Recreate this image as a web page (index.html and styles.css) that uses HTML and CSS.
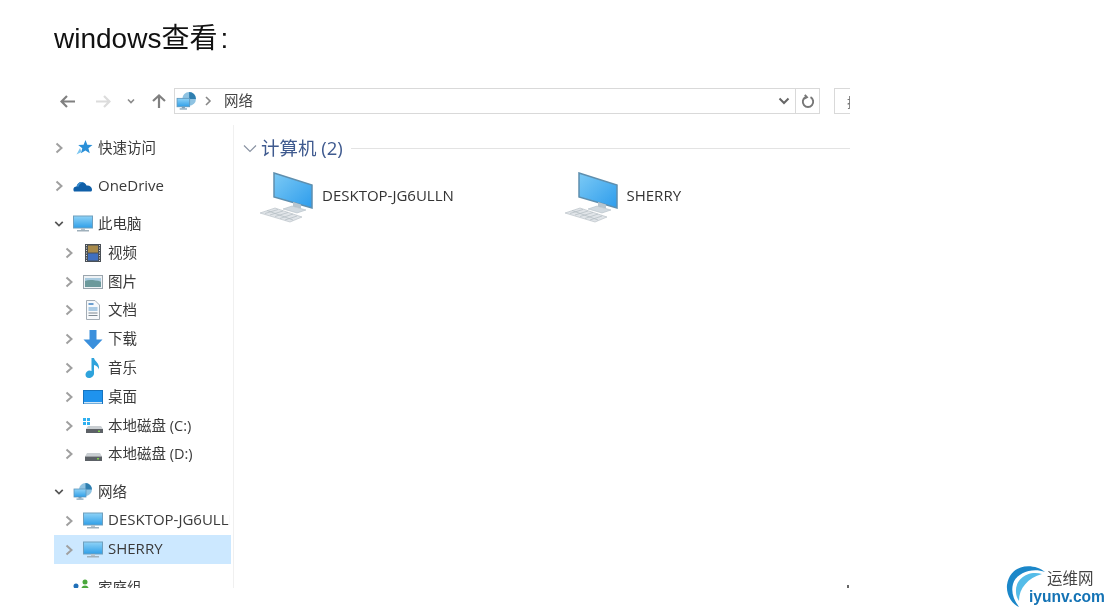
FILE: index.html
```html
<!DOCTYPE html>
<html lang="zh">
<head>
<meta charset="utf-8">
<title>windows查看</title>
<link rel="stylesheet" href="styles.css">
</head>
<body>
<svg class="defs" width="0" height="0" aria-hidden="true">
  <defs>
    <linearGradient id="scr" x1="0" y1="0" x2="0" y2="1"><stop offset="0" stop-color="#8fd3f7"/><stop offset="1" stop-color="#2f9fe8"/></linearGradient>
    <linearGradient id="bigscr" x1="0" y1="0" x2="1" y2="1"><stop offset="0" stop-color="#7ccaf5"/><stop offset="1" stop-color="#2d9cec"/></linearGradient>
    <symbol id="chev-r" viewBox="0 0 10 12"><path d="M2.500 1.500 7.500 6l-5 4.500" fill="none" stroke="#a0a0a0" stroke-width="2"/></symbol>
    <symbol id="chev-d" viewBox="0 0 12 10"><path d="M1.500 2.500 6 7l4.500-4.500" fill="none" stroke="#555" stroke-width="2"/></symbol>
    <symbol id="monitor" viewBox="0 0 20 18"><rect x="0.500" y="1" width="19" height="12" fill="url(#scr)" stroke="#6f9fbe"/><rect x="8" y="13" width="4" height="2" fill="#b5c3cc"/><rect x="4" y="15" width="12" height="1.500" fill="#9fb0bb"/></symbol>
    <symbol id="network" viewBox="0 0 20 18"><circle cx="12.500" cy="6.500" r="6.500" fill="#8fc3e2"/><path d="M12.500 0a6.500 6.500 0 0 1 6.500 6.500h-6.500z" fill="#2f7fb0"/><rect x="1" y="6" width="12" height="8" fill="url(#scr)" stroke="#5e97bd" stroke-width=".8"/><rect x="5.500" y="14" width="3" height="1.500" fill="#7fa0b5"/><rect x="3.500" y="15.500" width="7" height="1.200" fill="#7fa0b5"/></symbol>
    <symbol id="star" viewBox="0 0 20 18"><path d="m12.500 1 1.800 4.700 5.200.3-4.100 3.200 1.400 5.100-4.400-2.900-4.500 2.900 1.400-5.100L5.200 6l5.400-.3z" fill="#2a8fd8"/><path d="M7 9 3.500 15.500 8.500 13z" fill="#7cc6f0"/></symbol>
    <symbol id="cloud" viewBox="0 0 20 18"><path d="M1 14.500c-1.500-2.500 0-5 2.500-5 .8-3 3.800-5.500 7-4 1.500.6 2.400 1.600 3 3 3-.5 5.500 1.500 5.500 4 0 1.200-.4 2-1 2z" fill="#0f5fa8"/><path d="M3.500 9.500c.8-3 3.800-5.500 7-4-3 .3-4.500 2-5 4.300z" fill="#3d8fd0"/></symbol>
    <symbol id="film" viewBox="0 0 20 20"><rect x="2" y="1" width="16" height="18" fill="#4a5056"/><rect x="5" y="2.500" width="10" height="7" fill="#a88a4a"/><rect x="5" y="10.500" width="10" height="7" fill="#3f6fc0"/><path d="M3 2.500h1M3 5h1M3 7.500h1M3 10h1M3 12.500h1M3 15h1M3 17.500h1M16 2.500h1M16 5h1M16 7.500h1M16 10h1M16 12.500h1M16 15h1M16 17.500h1" stroke="#ddd" stroke-width="1"/></symbol>
    <symbol id="picture" viewBox="0 0 20 20"><rect x="0.500" y="3.500" width="19" height="13" fill="#eef2f5" stroke="#9aa5ad"/><path d="M2 6h16v3H2z" fill="#a9cbe0"/><path d="M2 9c4-1.500 9-1 16 .5V15H2z" fill="#6c9a9c"/></symbol>
    <symbol id="doc" viewBox="0 0 20 20"><path d="M3.500.5h8.500l4.500 4.500v14.500H3.500z" fill="#f7f9fb" stroke="#a4adb5"/><path d="M5.500 4h5" stroke="#3c7fc0" stroke-width="1.500"/><path d="M5.500 8h9M5.500 10h9" stroke="#5f9ccc"/><path d="M5.500 13h9M5.500 15.500h9" stroke="#7f8a93"/></symbol>
    <symbol id="down" viewBox="0 -1 20 20"><path d="M6.500 0h7v9.500h6L10 19.500.5 9.500h6z" fill="#3a8fdc"/></symbol>
    <symbol id="note" viewBox="0 0 20 20"><path d="M8.500 0h2.500c.3 3 6 5 5 11.500-.8-2.500-2.800-4-5-4.500v8.500c0 2.500-2.600 4.500-5 4.500S2.500 18.600 2.500 16.500s2.200-4 4-4c.8 0 1.500.2 2 .5z" fill="#2ea3dc"/></symbol>
    <symbol id="desk" viewBox="0 0 20 20"><rect x="0.500" y="3.500" width="19" height="13" fill="#1f93ee" stroke="#1674c0"/><path d="M1 15h18v1.500H1z" fill="#cfe6f7"/></symbol>
    <symbol id="drivec" viewBox="0 0 20 20"><rect x="0" y="2" width="3" height="3" fill="#2fb0f0"/><rect x="4" y="2" width="3" height="3" fill="#2fb0f0"/><rect x="0" y="6" width="3" height="3" fill="#2fb0f0"/><rect x="4" y="6" width="3" height="3" fill="#2fb0f0"/><path d="M5 10h13l2 3H3z" fill="#c9ced2"/><rect x="3" y="13" width="17" height="4" fill="#5c6166"/><rect x="15" y="14.500" width="2" height="1.500" fill="#7fd04a"/></symbol>
    <symbol id="drive" viewBox="0 0 20 20"><path d="M4 9h13l2 3.500H2z" fill="#c9ced2"/><rect x="2" y="12.500" width="17" height="4.500" fill="#5c6166"/><rect x="14" y="14" width="2" height="1.500" fill="#7fd04a"/></symbol>
    <symbol id="home" viewBox="0 0 20 20"><circle cx="3" cy="8" r="2.500" fill="#1f6fb8"/><path d="M-1 15c0-3 2-4.500 4-4.500S7 12 7 15z" fill="#1f6fb8"/><circle cx="12" cy="4" r="2.500" fill="#4aa83c"/><path d="M8 12c0-3 2-4.500 4-4.500s4 1.500 4 4.500z" fill="#4aa83c"/></symbol>
    <symbol id="bigpc" viewBox="0 0 56 52"><path d="M16 1 54 13v23L16 25z" fill="url(#bigscr)" stroke="#5f8fae" stroke-width="1.500"/><path d="M35 30l8 2.500v4l-8-2z" fill="#b9c6cf"/><path d="M25 37l9-3 14 4-9 3z" fill="#d2dae0" stroke="#aab6bf" stroke-width=".5"/><path d="M2 41 17 36l27 9-12 5z" fill="#e0e4e8" stroke="#b4bcc3" stroke-width=".6"/><path d="M7 41.500 20 37.500M12 43 25 39M17 44.500 30 40.500M22 46.500 35 42M27 48 39 44M9 38.500 35 48" stroke="#b2bbc2" stroke-width=".7"/></symbol>
  </defs>
</svg>

<main class="page">
  <h1 class="title">windows查看<span class="colon">:</span></h1>

  <section class="explorer">
    <header class="toolbar">
      <div class="nav">
        <svg class="nav-back" viewBox="0 0 15 13"><path d="M7 1 1.500 6.500 7 12M1.500 6.500H15" fill="none" stroke="#808080" stroke-width="2.200"/></svg>
        <svg class="nav-fwd" viewBox="0 0 15 13"><path d="M8 1l5.500 5.500L8 12M13.500 6.500H0" fill="none" stroke="#dcdcdc" stroke-width="2.200"/></svg>
        <svg class="nav-drop" viewBox="0 0 8 6"><path d="M1 1.500 4 4.500 7 1.500" fill="none" stroke="#8a8a8a" stroke-width="1.600"/></svg>
        <svg class="nav-up" viewBox="0 0 14 14"><path d="M1 7l6-5.500L13 7M7 1.500V14" fill="none" stroke="#808080" stroke-width="2.200"/></svg>
      </div>
      <div class="address">
        <svg class="addr-icon"><use href="#network"/></svg>
        <svg class="addr-chev" viewBox="0 0 8 10"><path d="M2 1l4 4-4 4" fill="none" stroke="#888" stroke-width="1.600"/></svg>
        <span class="addr-text">网络</span>
        <svg class="addr-drop" viewBox="0 0 12 8"><path d="M1.500 1.500 6 6l4.500-4.500" fill="none" stroke="#666" stroke-width="2"/></svg>
        <span class="addr-refresh">
          <svg viewBox="0 0 14 14"><path d="M4.500 3.200a5.200 5.200 0 1 0 5 0M3.800.8l2.200 2.400-2.800 1.600" fill="none" stroke="#777" stroke-width="1.900"/></svg>
        </span>
      </div>
      <div class="search"><span class="search-text">搜</span></div>
    </header>

    <div class="body">
      <nav class="tree">
        <div class="group">
          <div class="row"><svg class="chev"><use href="#chev-r"/></svg><svg class="ico"><use href="#star"/></svg><span>快速访问</span></div>
        </div>
        <div class="group">
          <div class="row"><svg class="chev"><use href="#chev-r"/></svg><svg class="ico"><use href="#cloud"/></svg><span class="lat">OneDrive</span></div>
        </div>
        <div class="group">
          <div class="row"><svg class="chev"><use href="#chev-d"/></svg><svg class="ico"><use href="#monitor"/></svg><span>此电脑</span></div>
          <div class="row sub"><svg class="chev"><use href="#chev-r"/></svg><svg class="ico"><use href="#film"/></svg><span>视频</span></div>
          <div class="row sub"><svg class="chev"><use href="#chev-r"/></svg><svg class="ico"><use href="#picture"/></svg><span>图片</span></div>
          <div class="row sub"><svg class="chev"><use href="#chev-r"/></svg><svg class="ico"><use href="#doc"/></svg><span>文档</span></div>
          <div class="row sub"><svg class="chev"><use href="#chev-r"/></svg><svg class="ico"><use href="#down"/></svg><span>下载</span></div>
          <div class="row sub"><svg class="chev"><use href="#chev-r"/></svg><svg class="ico"><use href="#note"/></svg><span>音乐</span></div>
          <div class="row sub"><svg class="chev"><use href="#chev-r"/></svg><svg class="ico"><use href="#desk"/></svg><span>桌面</span></div>
          <div class="row sub"><svg class="chev"><use href="#chev-r"/></svg><svg class="ico"><use href="#drivec"/></svg><span>本地磁盘 (C:)</span></div>
          <div class="row sub"><svg class="chev"><use href="#chev-r"/></svg><svg class="ico"><use href="#drive"/></svg><span>本地磁盘 (D:)</span></div>
        </div>
        <div class="group">
          <div class="row"><svg class="chev"><use href="#chev-d"/></svg><svg class="ico"><use href="#network"/></svg><span>网络</span></div>
          <div class="row sub"><svg class="chev"><use href="#chev-r"/></svg><svg class="ico"><use href="#monitor"/></svg><span class="lat clip">DESKTOP-JG6ULLN</span></div>
          <div class="row sub selected"><svg class="chev"><use href="#chev-r"/></svg><svg class="ico"><use href="#monitor"/></svg><span class="lat">SHERRY</span></div>
        </div>
        <div class="group">
          <div class="row"><svg class="chev"></svg><svg class="ico"><use href="#home"/></svg><span>家庭组</span></div>
        </div>
      </nav>

      <div class="content">
        <div class="section-head">
          <svg class="sec-chev" viewBox="0 0 14 9"><path d="M1 1.500 7 7.500l6-6" fill="none" stroke="#8a93a3" stroke-width="1.200"/></svg>
          <span class="sec-title">计算机 (2)</span>
          <span class="sec-line"></span>
        </div>
        <div class="items">
          <div class="item"><svg class="pc"><use href="#bigpc"/></svg><span>DESKTOP-JG6ULLN</span></div>
          <div class="item"><svg class="pc"><use href="#bigpc"/></svg><span>SHERRY</span></div>
        </div>
      </div>
    </div>
    <span class="tick"></span>
  </section>
</main>

<aside class="logo">
  <svg class="logo-mark" viewBox="0 0 40 44"><path d="M39 7C28-2 4-2 1 20c-1 10 5 19 12 22C7 34 5 26 7 19 10 8 26 2 39 7z" fill="#1b87c9"/><path d="M36 9C22 5 9 14 10 27c0 3 1 6 3 9C13 23 22 13 36 9z" fill="#55bce8"/></svg>
  <span class="logo-cn">运维网</span>
  <span class="logo-en">iyunv.com</span>
</aside>
</body>
</html>
```

FILE: styles.css
```css
* { box-sizing: border-box; }

html, body {
  margin: 0;
  height: 100%;
  background: #fff;
  overflow: hidden;
}

body {
  font-family: "Open Sans", "Noto Sans CJK SC", sans-serif;
  color: #333;
}

.defs { position: absolute; }

.page {
  padding: 20px 0 0 54px;
}

.title {
  margin: 0;
  height: 60px;
  font: 400 28px/38px "Liberation Sans", "Noto Sans CJK SC", sans-serif;
  color: #111;
  filter: blur(0.3px);
}

.colon { margin-left: 3px; }

.explorer {
  position: relative;
  width: 796px;
  height: 508px;
  overflow: hidden;
  font-size: 14.5px;
  filter: blur(0.35px);
}

.lat { font-size: 15px; }

.clip {
  max-width: 122px;
  overflow: hidden;
}

.tick {
  position: absolute;
  left: 793px;
  top: 505px;
  width: 2px;
  height: 3px;
  background: #666;
}

/* toolbar */
.toolbar {
  display: flex;
  align-items: center;
  height: 42px;
}

.nav {
  display: flex;
  align-items: center;
  width: 120px;
  height: 26px;
  flex: none;
}

.nav svg { display: block; flex: none; }
.nav-back { width: 15px; height: 13px; margin-left: 6px; }
.nav-fwd { width: 15px; height: 13px; margin-left: 21px; }
.nav-drop { width: 8px; height: 6px; margin-left: 16px; }
.nav-up { width: 14px; height: 14px; margin-left: 17px; }

.address {
  display: flex;
  align-items: center;
  width: 646px;
  height: 26px;
  flex: none;
  border: 1px solid #d9d9d9;
}

.addr-icon { width: 21px; height: 19px; margin-left: 1px; flex: none; }
.addr-chev { width: 8px; height: 10px; margin-left: 7px; flex: none; }
.addr-text { margin-left: 12px; padding-bottom: 3px; color: #444; flex: 1; }
.addr-drop { width: 12px; height: 8px; margin-right: 5px; flex: none; }

.addr-refresh {
  display: flex;
  align-items: center;
  justify-content: center;
  width: 24px;
  height: 100%;
  border-left: 1px solid #d9d9d9;
  flex: none;
}

.addr-refresh svg { width: 14px; height: 14px; }

.search {
  display: flex;
  align-items: center;
  margin-left: 14px;
  width: 40px;
  height: 26px;
  flex: none;
  padding-left: 12px;
  border: 1px solid #d9d9d9;
  overflow: hidden;
  font-size: 13px;
  color: #777;
}

.search-text { display: block; width: 4px; overflow: hidden; white-space: nowrap; }

/* body */
.body {
  display: flex;
  height: 463px;
  margin-top: 3px;
}

.tree {
  width: 180px;
  flex: none;
  padding-top: 9px;
  border-right: 1px solid #f0f0f0;
  overflow: hidden;
}

.group { margin-bottom: 9px; }

.row {
  display: flex;
  align-items: center;
  width: 177px;
  height: 28.8px;
  white-space: nowrap;
  overflow: hidden;
  color: #3a3a3a;
}

.row span { padding-bottom: 3px; }
.row.sub { padding-left: 10px; }
.row.selected { background: #cce8ff; }

.chev { width: 10px; height: 12px; margin-right: 9px; flex: none; }
.ico { width: 20px; height: 20px; margin-right: 5px; flex: none; }

/* content */
.content {
  flex: 1;
  min-width: 0;
  padding: 9px 0 0 9px;
}

.section-head {
  display: flex;
  align-items: center;
  height: 28px;
}

.sec-chev { width: 14px; height: 9px; flex: none; }

.sec-title {
  margin-left: 4px;
  padding-bottom: 3px;
  font-size: 18.5px;
  color: #3f5a8f;
}

.sec-line {
  flex: 1;
  height: 1px;
  margin-left: 8px;
  background: #e3e3e3;
}

.items {
  display: flex;
  margin-top: 10px;
  padding-left: 15px;
}

.item {
  display: flex;
  align-items: center;
  flex: none;
  width: 304.5px;
  height: 52px;
  font-size: 15px;
  color: #333;
}

.item span { padding-bottom: 6px; }

.pc { width: 56px; height: 52px; margin-right: 8px; flex: none; }

/* watermark logo */
.logo {
  position: absolute;
  left: 1006px;
  top: 565px;
  width: 100px;
  height: 44px;
  filter: blur(0.35px);
}

.logo-mark {
  position: absolute;
  left: 0;
  top: 0;
  width: 40px;
  height: 44px;
}

.logo-cn {
  position: absolute;
  left: 41px;
  top: 2px;
  font: 15.5px/20px "Noto Sans CJK SC", sans-serif;
  color: #444;
}

.logo-en {
  position: absolute;
  left: 23px;
  top: 23px;
  font: 700 15.6px/18px "Liberation Sans", sans-serif;
  color: #1473b5;
}
```
